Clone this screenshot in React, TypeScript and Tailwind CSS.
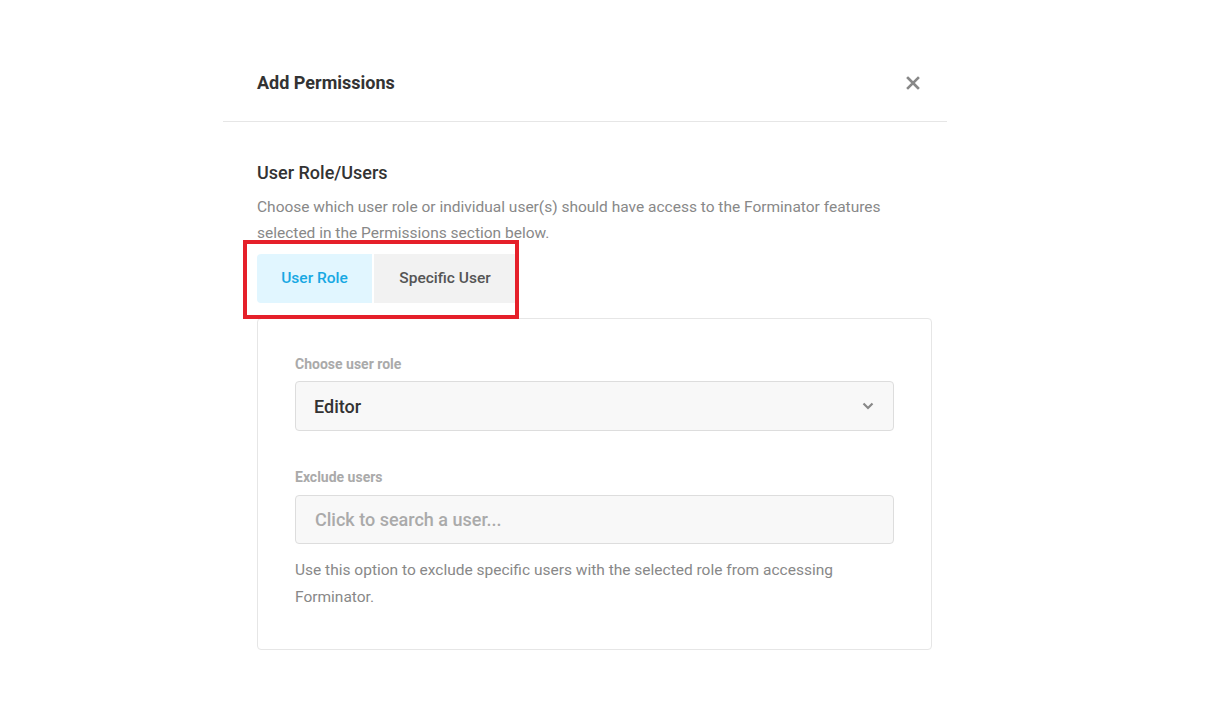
import React from "react";

export default function App() {
  return (
    <div className="min-h-[718px] w-[1220px] bg-white text-[#333]" style={{ fontFamily: "Roboto, 'Noto Sans', sans-serif" }}>
      <div className="ml-[223px] w-[724px]">
        <div className="flex items-center justify-between border-b border-[#e6e6e6] pl-[34px] pr-[24px] pt-[61px] pb-[16px]">
          <h1 className="text-[18px] font-bold leading-[44px] text-[#333]">Add Permissions</h1>
          <button className="flex h-5 w-5 items-center justify-center text-[#888]">
            <svg width="14" height="14" viewBox="0 0 14 14" fill="none">
              <path d="M2 2L12 12M12 2L2 12" stroke="currentColor" strokeWidth="2.6" strokeLinecap="square" />
            </svg>
          </button>
        </div>
        <div className="pl-[34px] pt-[38px]">
          <h2 className="text-[18px] font-medium leading-[26px] text-[#333]">User Role/Users</h2>
          <p className="mt-[8px] w-[660px] text-[15.5px] leading-[26px] text-[#888]">
            Choose which user role or individual user(s) should have access to the Forminator features selected in the Permissions section below.
          </p>
          <div className="relative mt-[8px] inline-flex">
            <div className="flex h-[49px] w-[115px] items-center justify-center rounded-l-[4px] bg-[#e1f6ff] text-[15.5px] font-medium text-[#17a8e3]">User Role</div>
            <div className="ml-[2px] flex h-[49px] w-[142px] items-center justify-center bg-[#f2f2f2] text-[15.5px] font-medium text-[#555]">Specific User</div>
            <div className="pointer-events-none absolute left-[-14px] top-[-14px] h-[79px] w-[276px] border-[4px] border-[#e5202a]" />
          </div>
          <div className="mt-[15px] w-[675px] rounded-[4px] border border-[#e6e6e6] px-[37px] pt-[36px] pb-[38px]">
            <label className="block text-[14px] font-bold leading-[18px] text-[#aaa]">Choose user role</label>
            <div className="mt-[8px] flex h-[50px] items-center justify-between rounded-[4px] border border-[#ddd] bg-[#f8f8f8] pl-[18px] pr-[19px]">
              <span className="text-[18px] font-medium text-[#333]">Editor</span>
              <svg width="12" height="8" viewBox="0 0 12 8" fill="none">
                <path d="M1.5 1.5L6 6L10.5 1.5" stroke="#888" strokeWidth="2.2" />
              </svg>
            </div>
            <label className="mt-[37px] block text-[14px] font-bold leading-[18px] text-[#aaa]">Exclude users</label>
            <div className="mt-[9px] flex h-[49px] items-center rounded-[4px] border border-[#ddd] bg-[#f8f8f8] pl-[19px]">
              <span className="text-[18px] font-medium text-[#aaa]">Click to search a user...</span>
            </div>
            <p className="mt-[13px] text-[15.5px] leading-[27px] text-[#888]">
              Use this option to exclude specific users with the selected role from accessing Forminator.
            </p>
          </div>
        </div>
      </div>
    </div>
  );
}
